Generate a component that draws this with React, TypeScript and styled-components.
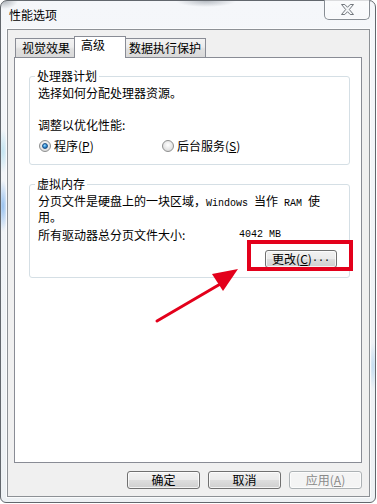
import React from "react";
import styled, { createGlobalStyle } from "styled-components";

const Global = createGlobalStyle`
  html, body { margin: 0; padding: 0; background: #ffffff; }
  body {
    width: 377px; height: 504px; overflow: hidden;
    font-family: "Noto Sans CJK SC", "Noto Sans", sans-serif;
    font-size: 12px; color: #000;
  }
`;

const Stage = styled.div`
  position: relative;
  width: 377px;
  height: 504px;
`;

const Window = styled.div`
  box-sizing: border-box;
  width: 376px;
  height: 503px;
  border: 1px solid #62676d;
  border-radius: 7px 7px 6px 6px;
  padding: 0 5px 5px 6px;
  display: flex;
  flex-direction: column;
  background:
    radial-gradient(ellipse 14px 8px at 3px 0px, rgba(90, 100, 110, 0.45), transparent),
    radial-gradient(ellipse 30px 6px at 205px 0px, rgba(90, 100, 112, 0.4), transparent),
    radial-gradient(ellipse 5px 26px at 2px 205px, rgba(60, 140, 230, 0.5), transparent),
    radial-gradient(ellipse 5px 22px at 2px 150px, rgba(120, 200, 230, 0.4), transparent),
    radial-gradient(ellipse 4px 24px at 372px 365px, rgba(120, 180, 230, 0.35), transparent),
    linear-gradient(#f5f7fa, #edf1f4);
`;

const TitleBar = styled.div`
  display: flex;
  align-items: flex-start;
  height: 28px;
  flex: none;
`;

const Title = styled.div`
  padding: 7px 0 0 2px;
  line-height: 14px;
  font-size: 12px;
  color: #000;
`;

const CloseButton = styled.div`
  margin-left: auto;
  margin-top: -1px;
  box-sizing: border-box;
  width: 46px;
  height: 20px;
  border: 1px solid #878d94;
  border-top: none;
  border-radius: 0 0 5px 5px;
  background: linear-gradient(rgba(255, 255, 255, 0.55), rgba(255, 255, 255, 0.25));
  box-shadow: inset 0 0 0 1px rgba(255, 255, 255, 0.5);
  display: flex;
  align-items: center;
  justify-content: center;
`;

const Client = styled.div`
  flex: 1;
  min-height: 0;
  border: 1px solid #8d9196;
  box-shadow: 0 0 0 1px rgba(255, 255, 255, 0.7);
  background: #f0f0f0;
  padding: 6px 7px 7px 6px;
  display: flex;
  flex-direction: column;
`;

const TabStrip = styled.div`
  position: relative;
  z-index: 1;
  display: flex;
  align-items: flex-end;
  height: 21px;
  padding-left: 1px;
  flex: none;
`;

const Tab = styled.div<{ $w: number; $pl: number; $active?: boolean; $first?: boolean }>`
  box-sizing: border-box;
  width: ${(p) => p.$w}px;
  height: ${(p) => (p.$active ? 22 : 19)}px;
  padding-left: ${(p) => p.$pl}px;
  margin-left: ${(p) => (p.$first ? 0 : -1)}px;
  margin-bottom: ${(p) => (p.$active ? -1 : 0)}px;
  border: 1px solid #898c95;
  border-bottom: none;
  line-height: ${(p) => (p.$active ? 16 : 18)}px;
  white-space: nowrap;
  background: ${(p) =>
    p.$active
      ? "#ffffff"
      : "linear-gradient(#f3f3f3 0%, #ececec 45%, #e0e0e0 55%, #d9d9d9 100%)"};
  position: relative;
  z-index: ${(p) => (p.$active ? 2 : 1)};
`;

const TabPage = styled.div`
  flex: 1;
  min-height: 0;
  background: #ffffff;
  border: 1px solid #898c95;
  padding: 10px 11px 0 14px;
  display: flex;
  flex-direction: column;
`;

const Group = styled.fieldset<{ $gapTop?: number; $pt: number; $pb: number }>`
  margin: ${(p) => p.$gapTop ?? 0}px 0 0 0;
  min-width: 0;
  border: 1px solid #d5dfe5;
  border-radius: 3px;
  padding: ${(p) => p.$pt}px 12px ${(p) => p.$pb}px 8px;
`;

const Legend = styled.legend`
  padding: 0 2px;
  margin-left: -3px;
  line-height: 16px;
  font-size: 12px;
`;

const Line = styled.div<{ $mt?: number; $lh?: number }>`
  margin-top: ${(p) => p.$mt ?? 0}px;
  line-height: ${(p) => p.$lh ?? 14}px;
  white-space: nowrap;
`;

const Mono = styled.span`
  font-family: "Liberation Mono", "DejaVu Sans Mono", monospace;
  font-size: 10px;
  white-space: pre;
`;

const RadioRow = styled.div`
  margin-top: 7px;
  display: flex;
  align-items: center;
  height: 14px;
  padding-left: 1px;
`;

const RadioOption = styled.label<{ $w?: number }>`
  display: flex;
  align-items: center;
  gap: 3px;
  width: ${(p) => (p.$w ? `${p.$w}px` : "auto")};
  line-height: 14px;
  white-space: nowrap;
`;

const RadioCircle = styled.span`
  box-sizing: border-box;
  width: 12px;
  height: 12px;
  border-radius: 50%;
  border: 1px solid #8e8f8f;
  background: radial-gradient(circle at 50% 40%, #ffffff 0%, #e6e6e6 55%, #cfcfcf 100%);
  display: flex;
  align-items: center;
  justify-content: center;
  flex: none;
`;

const RadioDot = styled.span`
  box-sizing: border-box;
  width: 6px;
  height: 6px;
  border-radius: 50%;
  border: 1px solid #1b4f86;
  background: radial-gradient(circle at 40% 35%, #9fdcff 0%, #2f8fd6 50%, #0e4c8c 100%);
`;

const SizeRow = styled.div`
  margin-top: 5px;
  display: grid;
  grid-template-columns: 201px auto;
  line-height: 14px;
  white-space: nowrap;
`;

const ButtonRow = styled.div<{ $mt: number; $gap?: number }>`
  margin-top: ${(p) => p.$mt}px;
  display: flex;
  justify-content: flex-end;
  gap: ${(p) => p.$gap ?? 0}px;
  flex: none;
`;

const Button = styled.div<{ $w: number; $disabled?: boolean }>`
  box-sizing: border-box;
  width: ${(p) => p.$w}px;
  height: 18px;
  border: 1px solid ${(p) => (p.$disabled ? "#adb2b5" : "#707070")};
  border-radius: 3px;
  background: ${(p) =>
    p.$disabled
      ? "#f4f4f4"
      : "linear-gradient(#f2f2f2 0%, #ebebeb 48%, #dddddd 52%, #cfcfcf 100%)"};
  box-shadow: inset 0 0 0 1px rgba(255, 255, 255, 0.75);
  color: ${(p) => (p.$disabled ? "#8a8a8a" : "#000")};
  display: flex;
  align-items: center;
  justify-content: center;
  line-height: 16px;
  white-space: nowrap;
`;

const Highlight = styled.div`
  position: absolute;
  left: 247px;
  top: 240px;
  width: 106px;
  height: 31px;
  box-sizing: border-box;
  border: 4px solid #e3001b;
  pointer-events: none;
`;

const ArrowLayer = styled.svg`
  position: absolute;
  left: 0;
  top: 0;
  pointer-events: none;
`;

const CloseGlyph = () => (
  <svg width="13" height="11" viewBox="0 0 13 11">
    <polygon
      points="0.5,0.5 3.8,0.5 6.5,3.3 9.2,0.5 12.5,0.5 8.3,5.5 12.5,10.5 9.2,10.5 6.5,7.7 3.8,10.5 0.5,10.5 4.7,5.5"
      fill="#f4f6f8"
      stroke="#72777d"
      strokeWidth="1"
      strokeLinejoin="round"
    />
  </svg>
);

export default function App() {
  return (
    <Stage>
      <Global />
      <Window>
        <TitleBar>
          <Title>性能选项</Title>
          <CloseButton>
            <CloseGlyph />
          </CloseButton>
        </TitleBar>
        <Client>
          <TabStrip>
            <Tab $w={60} $pl={6} $first>
              视觉效果
            </Tab>
            <Tab $w={52} $pl={6} $active>
              高级
            </Tab>
            <Tab $w={81} $pl={3}>
              数据执行保护
            </Tab>
          </TabStrip>
          <TabPage>
            <Group $pt={2} $pb={11}>
              <Legend>处理器计划</Legend>
              <Line>选择如何分配处理器资源。</Line>
              <Line $mt={18}>调整以优化性能:</Line>
              <RadioRow>
                <RadioOption $w={123}>
                  <RadioCircle>
                    <RadioDot />
                  </RadioCircle>
                  <span>
                    程序(<u>P</u>)
                  </span>
                </RadioOption>
                <RadioOption>
                  <RadioCircle />
                  <span>
                    后台服务(<u>S</u>)
                  </span>
                </RadioOption>
              </RadioRow>
            </Group>
            <Group $gapTop={11} $pt={2} $pb={9}>
              <Legend>虚拟内存</Legend>
              <Line $lh={13}>
                分页文件是硬盘上的一块区域，<Mono>Windows </Mono>当作<Mono> RAM </Mono>使
              </Line>
              <Line $lh={13}>用。</Line>
              <SizeRow>
                <span>所有驱动器总分页文件大小:</span>
                <Mono>4042 MB</Mono>
              </SizeRow>
              <ButtonRow $mt={8}>
                <Button $w={72}>
                  更改(<u>C</u>)<Mono>...</Mono>
                </Button>
              </ButtonRow>
            </Group>
          </TabPage>
          <ButtonRow $mt={8} $gap={8}>
            <Button $w={73}>确定</Button>
            <Button $w={73}>取消</Button>
            <Button $w={73} $disabled>
              应用(<u>A</u>)
            </Button>
          </ButtonRow>
        </Client>
      </Window>
      <Highlight />
      <ArrowLayer width="377" height="504" viewBox="0 0 377 504">
        <line x1="157" y1="321" x2="222" y2="283" stroke="#e3001b" strokeWidth="3" strokeLinecap="round" />
        <polygon points="238,269 212,274 223,291" fill="#e3001b" />
      </ArrowLayer>
    </Stage>
  );
}
